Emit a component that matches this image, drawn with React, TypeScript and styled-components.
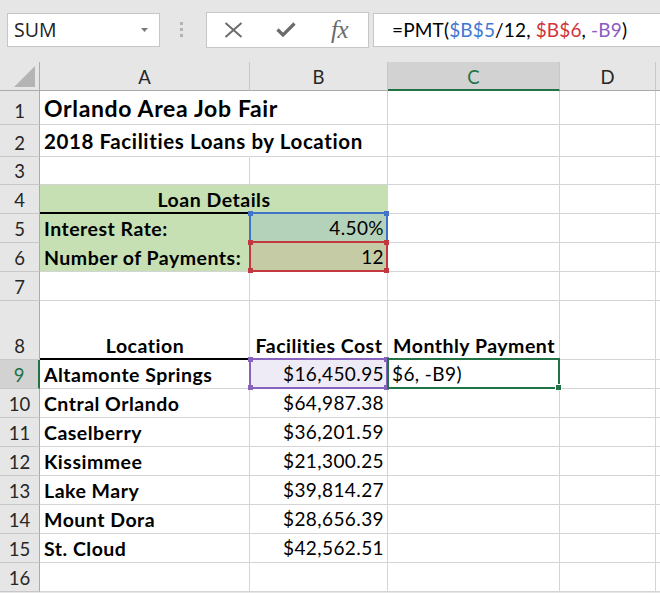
import React from "react";
import styled, { createGlobalStyle } from "styled-components";

const Global = createGlobalStyle`
  html, body { margin: 0; padding: 0; background: #fff; }
  body { font-family: Lato, "Open Sans", sans-serif; overflow: hidden; }
`;

const GRID = "#d4d4d4";
const GREEN = "#217346";

const Page = styled.div`
  width: 660px;
  height: 593px;
  overflow: hidden;
  background: #e6e6e6;
`;

const Toolbar = styled.div`
  height: 62px;
  box-sizing: border-box;
  padding-bottom: 3px;
  display: flex;
  align-items: center;
`;

const NameBox = styled.div`
  margin-left: 7px;
  width: 153px;
  height: 34px;
  box-sizing: border-box;
  background: #fff;
  border: 1px solid #c6c6c6;
  display: flex;
  align-items: center;
  padding-left: 6px;
  font-family: "Open Sans", "Noto Sans", sans-serif;
  font-size: 19.5px;
  color: #222;
`;

const Caret = styled.svg`
  margin-left: auto;
  margin-right: 11px;
`;

const Grip = styled.div`
  margin-left: 20px;
  width: 3px;
  display: flex;
  flex-direction: column;
  gap: 3px;
`;

const GripDot = styled.span`
  width: 3px;
  height: 3px;
  background: #b3b3b3;
`;

const ButtonBox = styled.div`
  margin-left: 23px;
  width: 163px;
  height: 36px;
  box-sizing: border-box;
  background: #fff;
  border: 1px solid #c6c6c6;
  display: flex;
  align-items: center;
  padding-left: 17px;
`;

const IconSlot = styled.div<{ $w: number }>`
  width: ${(p) => p.$w}px;
  display: flex;
  align-items: center;
  justify-content: flex-start;
`;

const Fx = styled.span`
  font-family: "Liberation Serif", "DejaVu Serif", serif;
  font-style: italic;
  font-size: 25px;
  color: #6b6b6b;
  letter-spacing: -0.5px;
`;

const FormulaBox = styled.div`
  margin-left: 4px;
  flex: 1;
  height: 34px;
  box-sizing: border-box;
  background: #fff;
  border: 1px solid #c6c6c6;
  border-right: none;
  display: flex;
  align-items: center;
  padding-left: 18px;
  font-size: 19px;
  letter-spacing: 0.15px;
  color: #000;
  white-space: pre;
`;

const Ref = styled.span<{ $c: string }>`
  color: ${(p) => p.$c};
`;

const Sheet = styled.div`
  display: grid;
  grid-template-columns: 40px 210px 138px 172px 96px 1fr;
  grid-template-rows: 29px 34px 32px 28px 29px 29px 29px 29px 59px repeat(8, 29px);
  background: #fff;
`;

const Corner = styled.div`
  box-sizing: border-box;
  background: #e6e6e6;
  border-right: 1px solid #ababab;
  border-bottom: 1px solid #ababab;
  display: flex;
  align-items: flex-end;
  justify-content: flex-end;
  padding: 0 4px 3px 0;
`;

const ColHead = styled.div<{ $active?: boolean }>`
  box-sizing: border-box;
  background: ${(p) => (p.$active ? "#d2d2d2" : "#e6e6e6")};
  border-right: 1px solid #c8c8c8;
  border-bottom: ${(p) => (p.$active ? `2px solid ${GREEN}` : "1px solid #ababab")};
  color: ${(p) => (p.$active ? GREEN : "#262626")};
  display: flex;
  align-items: center;
  justify-content: center;
  font-size: 18.5px;
  padding-top: 2px;
`;

const RowHead = styled.div<{ $active?: boolean }>`
  box-sizing: border-box;
  background: ${(p) => (p.$active ? "#d2d2d2" : "#e6e6e6")};
  border-right: ${(p) => (p.$active ? `2px solid ${GREEN}` : "1px solid #ababab")};
  border-bottom: 1px solid #c8c8c8;
  color: ${(p) => (p.$active ? GREEN : "#262626")};
  display: flex;
  align-items: flex-end;
  justify-content: center;
  padding-bottom: 4px;
  font-size: 18.5px;
  line-height: 1;
`;

type CellProps = {
  $align?: "left" | "right" | "center";
  $bold?: boolean;
  $bg?: string;
  $size?: number;
  $track?: number;
  $span?: number;
  $rule?: boolean;
  $edge?: boolean;
  $spill?: boolean;
};

const Cell = styled.div<CellProps>`
  position: relative;
  z-index: ${(p) => (p.$spill ? 1 : "auto")};
  min-width: 0;
  box-sizing: border-box;
  grid-column: span ${(p) => p.$span ?? 1};
  background: ${(p) => p.$bg ?? "#fff"};
  border-right: 1px solid
    ${(p) => (p.$spill ? "transparent" : p.$bg && !p.$edge ? p.$bg : GRID)};
  border-bottom: ${(p) =>
    p.$rule ? "2px solid #000" : `1px solid ${p.$bg && !p.$edge ? p.$bg : GRID}`};
  display: flex;
  align-items: flex-end;
  justify-content: ${(p) =>
    p.$align === "right" ? "flex-end" : p.$align === "center" ? "center" : "flex-start"};
  padding: 0 3px ${(p) => (p.$rule ? 2 : 3)}px 4px;
  font-size: ${(p) => p.$size ?? (p.$bold ? 19.5 : 19)}px;
  letter-spacing: ${(p) => p.$track ?? (p.$bold ? 0.5 : 0.4)}px;
  font-weight: ${(p) => (p.$bold ? 700 : 400)};
  line-height: 1.1;
  white-space: nowrap;
  color: #000;
`;

const RefBox = styled.div<{ $c: string }>`
  position: absolute;
  top: -2px;
  left: -1px;
  right: -1px;
  bottom: -1px;
  border: 2px solid ${(p) => p.$c};
  pointer-events: none;
  z-index: 2;
`;

const Handle = styled.span<{ $c: string; $v: "top" | "bottom"; $h: "left" | "right" }>`
  position: absolute;
  width: 5px;
  height: 5px;
  background: ${(p) => p.$c};
  ${(p) => p.$v}: -3px;
  ${(p) => p.$h}: -3px;
`;

const ActiveBox = styled.div`
  position: absolute;
  top: -2px;
  left: -1px;
  right: -1px;
  bottom: -1px;
  border: 2px solid ${GREEN};
  pointer-events: none;
  z-index: 3;
`;

const FillHandle = styled.span`
  position: absolute;
  right: -4px;
  bottom: -4px;
  width: 5px;
  height: 5px;
  background: ${GREEN};
  border: 1px solid #fff;
`;

type Corner4 = ["top" | "bottom", "left" | "right"];

const Ranged = ({ c, corners }: { c: string; corners: Corner4[] }) => (
  <RefBox $c={c}>
    {corners.map(([v, h]) => (
      <Handle key={v + h} $c={c} $v={v} $h={h} />
    ))}
  </RefBox>
);

const ALL: Corner4[] = [
  ["top", "left"],
  ["top", "right"],
  ["bottom", "left"],
  ["bottom", "right"],
];

const BLUE = "#4174c8";
const RED = "#c3373f";
const PURPLE = "#8763bd";
const FILL = "#c6e0b4";

const locations: Array<[string, string]> = [
  ["Altamonte Springs", "$16,450.95"],
  ["Cntral Orlando", "$64,987.38"],
  ["Caselberry", "$36,201.59"],
  ["Kissimmee", "$21,300.25"],
  ["Lake Mary", "$39,814.27"],
  ["Mount Dora", "$28,656.39"],
  ["St. Cloud", "$42,562.51"],
];

const Blank = () => (
  <>
    <Cell />
    <Cell />
  </>
);

export default function App() {
  return (
    <Page>
      <Global />
      <Toolbar>
        <NameBox>
          SUM
          <Caret width="7" height="4" viewBox="0 0 7 4">
            <path d="M0 0 L7 0 L3.5 4 Z" fill="#7a7a7a" />
          </Caret>
        </NameBox>
        <Grip>
          <GripDot />
          <GripDot />
          <GripDot />
        </Grip>
        <ButtonBox>
          <IconSlot $w={52}>
            <svg width="19" height="16" viewBox="0 0 19 16">
              <path d="M1.5 1 L17.5 15 M17.5 1 L1.5 15" stroke="#6b6b6b" strokeWidth="2" fill="none" />
            </svg>
          </IconSlot>
          <IconSlot $w={55}>
            <svg width="20" height="15" viewBox="0 0 20 15">
              <path d="M1.5 7.5 L7 13 L18.5 1.5" stroke="#6b6b6b" strokeWidth="3.2" fill="none" />
            </svg>
          </IconSlot>
          <Fx>fx</Fx>
        </ButtonBox>
        <FormulaBox>
          {"=PMT("}
          <Ref $c="#3e78d2">$B$5</Ref>
          {"/12, "}
          <Ref $c="#cf343c">$B$6</Ref>
          {", "}
          <Ref $c="#8a5cc4">-B9</Ref>
          {")"}
        </FormulaBox>
      </Toolbar>
      <Sheet>
        <Corner>
          <svg width="21" height="21" viewBox="0 0 21 21">
            <path d="M21 0 L21 21 L0 21 Z" fill="#b4b4b4" />
          </svg>
        </Corner>
        <ColHead>A</ColHead>
        <ColHead>B</ColHead>
        <ColHead $active>C</ColHead>
        <ColHead>D</ColHead>
        <ColHead />

        <RowHead>1</RowHead>
        <Cell $bold $spill $size={23} $track={0.65}>
          Orlando Area Job Fair
        </Cell>
        <Cell />
        <Blank />
        <Cell />

        <RowHead>2</RowHead>
        <Cell $bold $spill $size={20.5} $track={0.6}>
          2018 Facilities Loans by Location
        </Cell>
        <Cell />
        <Blank />
        <Cell />

        <RowHead>3</RowHead>
        <Cell />
        <Cell />
        <Blank />
        <Cell />

        <RowHead>4</RowHead>
        <Cell $span={2} $bg={FILL} $edge $rule $bold $align="center">
          Loan Details
        </Cell>
        <Blank />
        <Cell />

        <RowHead>5</RowHead>
        <Cell $bg={FILL} $bold>Interest Rate:</Cell>
        <Cell $bg="#b4d2b9" $align="right">
          4.50%
          <Ranged c={BLUE} corners={[["top", "left"], ["top", "right"]]} />
        </Cell>
        <Blank />
        <Cell />

        <RowHead>6</RowHead>
        <Cell $bg={FILL} $edge $bold>Number of Payments:</Cell>
        <Cell $bg="#c5cba5" $align="right">
          12
          <Ranged c={RED} corners={ALL} />
        </Cell>
        <Blank />
        <Cell />

        <RowHead>7</RowHead>
        <Cell />
        <Cell />
        <Blank />
        <Cell />

        <RowHead>8</RowHead>
        <Cell $rule $bold $align="center">Location</Cell>
        <Cell $bold $align="center">Facilities Cost</Cell>
        <Cell $bold $align="center">Monthly Payment</Cell>
        <Cell />
        <Cell />

        {locations.map(([name, cost], i) => (
          <React.Fragment key={name}>
            <RowHead $active={i === 0}>{9 + i}</RowHead>
            <Cell $bold>{name}</Cell>
            {i === 0 ? (
              <Cell $bg="#efebf6" $edge $align="right">
                {cost}
                <Ranged c={PURPLE} corners={ALL} />
              </Cell>
            ) : (
              <Cell $align="right">{cost}</Cell>
            )}
            {i === 0 ? (
              <Cell>
                $6, -B9)
                <ActiveBox>
                  <FillHandle />
                </ActiveBox>
              </Cell>
            ) : (
              <Cell />
            )}
            <Cell />
            <Cell />
          </React.Fragment>
        ))}

        <RowHead>16</RowHead>
        <Cell />
        <Cell />
        <Blank />
        <Cell />
      </Sheet>
    </Page>
  );
}
